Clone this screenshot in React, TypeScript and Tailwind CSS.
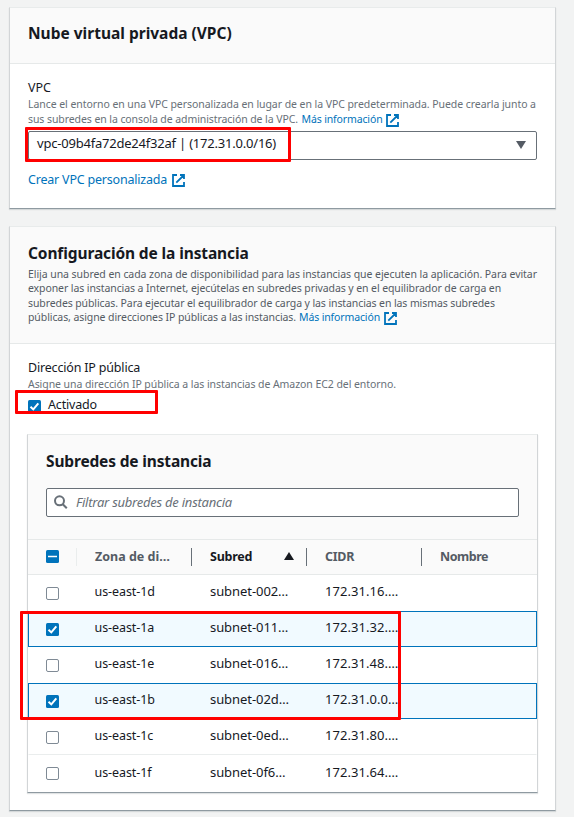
import type { ReactNode } from 'react';

function ExternalIcon({ className = '' }: { className?: string }) {
  return (
    <svg viewBox="0 0 13 13" className={`inline-block size-[13px] shrink-0 fill-none stroke-[#0073bb] stroke-[1.8] ${className}`}>
      <path d="M8 1h4v4M4.3 8.7 12 1M12 8v4H1V1h4" />
    </svg>
  );
}

function Checkbox({ state, className = '' }: { state: 'on' | 'off' | 'mixed'; className?: string }) {
  if (state === 'off') {
    return <span className={`block size-[13px] shrink-0 rounded-[2px] border border-[#7f8a95] bg-white ${className}`} />;
  }
  return (
    <svg viewBox="0 0 13 13" className={`block size-[13px] shrink-0 fill-none stroke-white ${state === 'on' ? 'stroke-2' : 'stroke-[1.5]'} ${className}`}>
      <rect width="13" height="13" rx="1.5" className="fill-[#0073bb] stroke-none" />
      {state === 'on' ? <path d="M2.5 6.7 5.3 9.4 10.3 3.4" /> : <path d="M2 6.5h9" />}
    </svg>
  );
}

function Panel({ header, headerClass, className = '', children }: { header: ReactNode; headerClass: string; className?: string; children: ReactNode }) {
  return (
    <section className={`border border-x-[#d2d5d7] border-t-[#e8ebeb] border-b-[#8f9aa1] bg-white shadow-[0_1px_1px_rgba(0,28,36,0.12)] ${className}`}>
      <header className={`border-b border-[#e6e9e9] bg-[#fafafa] ${headerClass}`}>{header}</header>
      {children}
    </section>
  );
}

type Subnet = { zone: string; subnet: string; cidr: string; selected?: boolean };

const subnets: Subnet[] = [
  { zone: 'us-east-1d', subnet: 'subnet-002…', cidr: '172.31.16.…' },
  { zone: 'us-east-1a', subnet: 'subnet-011…', cidr: '172.31.32.…', selected: true },
  { zone: 'us-east-1e', subnet: 'subnet-016…', cidr: '172.31.48.…' },
  { zone: 'us-east-1b', subnet: 'subnet-02d…', cidr: '172.31.0.0…', selected: true },
  { zone: 'us-east-1c', subnet: 'subnet-0ed…', cidr: '172.31.80.…' },
  { zone: 'us-east-1f', subnet: 'subnet-0f6…', cidr: '172.31.64.…' },
];

const columns = 'grid grid-cols-[67px_115px_115px_115px_1fr]';

function rowClass(row: Subnet, last: boolean) {
  if (row.selected) return 'h-9 leading-[30px] border-[#0073bb] bg-[#f1faff]';
  if (last) return 'h-[37px] leading-8 border-transparent';
  return row.zone === 'us-east-1c' ? 'h-9 leading-[30px] border-transparent border-b-[#eaeded]' : 'h-9 leading-[30px] border-transparent';
}

export default function App() {
  return (
    <div className="relative h-[817px] w-[574px] overflow-hidden bg-[#f2f3f3] pt-[7px] pl-[9px] font-['Noto_Sans',sans-serif] whitespace-nowrap text-[#16191f]">
      <Panel
        className="h-[202px] w-[547px]"
        headerClass="h-14 pt-[13px] pl-[18px]"
        header={<h2 className="text-[15.5px] leading-6 font-bold">Nube virtual privada (VPC)</h2>}
      >
        <div className="px-[18px] pt-[15px]">
          <div className="text-[12.5px] leading-[18px]">VPC</div>
          <div className="text-[10.5px] leading-[15px] text-[#687078]">
            <div className="tracking-[-0.06px]">Lance el entorno en una VPC personalizada en lugar de en la VPC predeterminada. Puede crearla junto a</div>
            <div className="flex h-[15px]">
              <span className="tracking-[-0.08px]">sus subredes en la consola de administración de la VPC.</span>
              <span className="ml-[3.5px] tracking-[-0.13px] text-[#0073bb]">Más información</span>
              <ExternalIcon className="mt-[2px] ml-[3px]" />
            </div>
          </div>
          <div className="mt-[4px] -mr-px flex h-[29px] w-[509px] items-center justify-between rounded-[2px] border border-[#687078] pr-[10px] pl-2">
            <span className="pb-[3px] text-[13px] tracking-[-0.21px]">vpc-09b4fa72de24f32af | (172.31.0.0/16)</span>
            <svg viewBox="0 0 10 8" className="mb-px h-2 w-[10px] fill-[#545b64]"><path d="M0 0h10L5 8z" /></svg>
          </div>
          <div className="mt-[10px] flex h-5 text-[12.5px] leading-5 tracking-[-0.2px] text-[#0073bb]">
            Crear VPC personalizada
            <ExternalIcon className="mt-1 ml-[5px]" />
          </div>
        </div>
      </Panel>

      <Panel
        className="mt-[17px] h-[585px] w-[547px]"
        headerClass="h-[117px] pt-[14px] pl-[18px]"
        header={
          <>
            <h2 className="text-[15.5px] leading-6 font-bold tracking-[-0.12px]">Configuración de la instancia</h2>
            <div className="mt-[2px] text-[10.5px] leading-[14.3px] text-[#545b64]">
              <div className="tracking-[-0.058px]">Elija una subred en cada zona de disponibilidad para las instancias que ejecuten la aplicación. Para evitar</div>
              <div className="tracking-[-0.092px]">exponer las instancias a Internet, ejecútelas en subredes privadas y en el equilibrador de carga en</div>
              <div className="tracking-[-0.1px]">subredes públicas. Para ejecutar el equilibrador de carga y las instancias en las mismas subredes</div>
              <div className="flex">
                <span className="tracking-[-0.088px]">públicas, asigne direcciones IP públicas a las instancias.</span>
                <span className="ml-[3px] tracking-[-0.13px] text-[#0073bb]">Más información</span>
                <ExternalIcon className="mt-[2px] ml-[3.5px]" />
              </div>
            </div>
          </>
        }
      >
        <div className="pt-[15px] pr-[17px] pl-[17px]">
          <div className="pl-px">
            <div className="text-[12.5px] leading-[18px] tracking-[-0.18px]">Dirección IP pública</div>
            <div className="text-[10.5px] leading-[15px] tracking-[-0.063px] text-[#687078]">Asigne una dirección IP pública a las instancias de Amazon EC2 del entorno.</div>
            <label className="mt-[3px] flex h-5">
              <Checkbox state="on" className="mt-[5px]" />
              <span className="ml-[7px] text-[12.5px] leading-5 tracking-[-0.17px]">Activado</span>
            </label>
          </div>

          <Panel
            className="mt-[19px] h-[359px] w-[511px]"
            headerClass="h-[105px] pt-[14px] pr-[18px] pl-[18px]"
            header={
              <>
                <h3 className="text-[15.5px] leading-6 font-bold tracking-[-0.16px]">Subredes de instancia</h3>
                <div className="mt-[15px] flex h-[29px] w-[473px] items-center rounded-[2px] border border-[#687078] bg-white pl-[7px]">
                  <svg viewBox="0 0 14 14" className="mb-px size-[14px] fill-none stroke-[#687078] stroke-2">
                    <circle cx="5.5" cy="5.8" r="4.5" />
                    <path d="m8.8 9.2 4 4" />
                  </svg>
                  <span className="ml-2 text-[13px] tracking-[-0.24px] text-[#687078] italic">Filtrar subredes de instancia</span>
                </div>
              </>
            }
          >
            <div className={`${columns} h-[35px] items-center border-b border-[#e6e9e9] bg-[#fafafa] text-[12.5px] leading-[18px] font-bold text-[#545b64]`}>
              <div className="flex justify-between pl-[18px]">
                <Checkbox state="mixed" className="mt-[2px]" />
                <span className="mr-[18px] h-[18px] w-px bg-[#eaeded]" />
              </div>
              <div className="flex justify-between pr-[18px]"><span>Zona de di…</span><span className="h-[18px] w-px bg-[#687078]" /></div>
              <div className="flex items-center pr-[18px] text-[#16191f]">
                <span className="tracking-[-0.25px]">Subred</span>
                <svg viewBox="0 0 10 8" className="mr-3 mb-[2px] ml-auto h-2 w-[10px] fill-[#16191f]"><path d="M5 0l5 8H0z" /></svg>
                <span className="h-[18px] w-px bg-[#687078]" />
              </div>
              <div className="flex justify-between pr-[18px]"><span className="tracking-[-0.3px]">CIDR</span><span className="h-[18px] w-px bg-[#687078]" /></div>
              <div className="tracking-[-0.48px]">Nombre</div>
            </div>
            {subnets.map((row, i) => (
              <div key={row.zone} className={`${columns} border text-[13px] ${rowClass(row, i === subnets.length - 1)}`}>
                <Checkbox state={row.selected ? 'on' : 'off'} className="mt-[11px] ml-[17px]" />
                <span className="-ml-[1.5px] pt-px text-[12.5px] tracking-[-0.08px]">{row.zone}</span>
                <span className="-ml-px tracking-[-0.07px]">{row.subnet}</span>
                <span className="-ml-px tracking-[0.05px]">{row.cidr}</span>
              </div>
            ))}
          </Panel>
        </div>
      </Panel>

      <div className="absolute top-[127px] left-[25px] h-[35px] w-[266px] rounded-[1px] border-3 border-[#ff0000]" />
      <div className="absolute top-[390px] left-[15px] h-6 w-[143px] rounded-[1px] border-3 border-[#ff0000]" />
      <div className="absolute top-[611px] left-5 h-[109px] w-[381px] rounded-[1px] border-3 border-[#ff0000]" />
    </div>
  );
}
